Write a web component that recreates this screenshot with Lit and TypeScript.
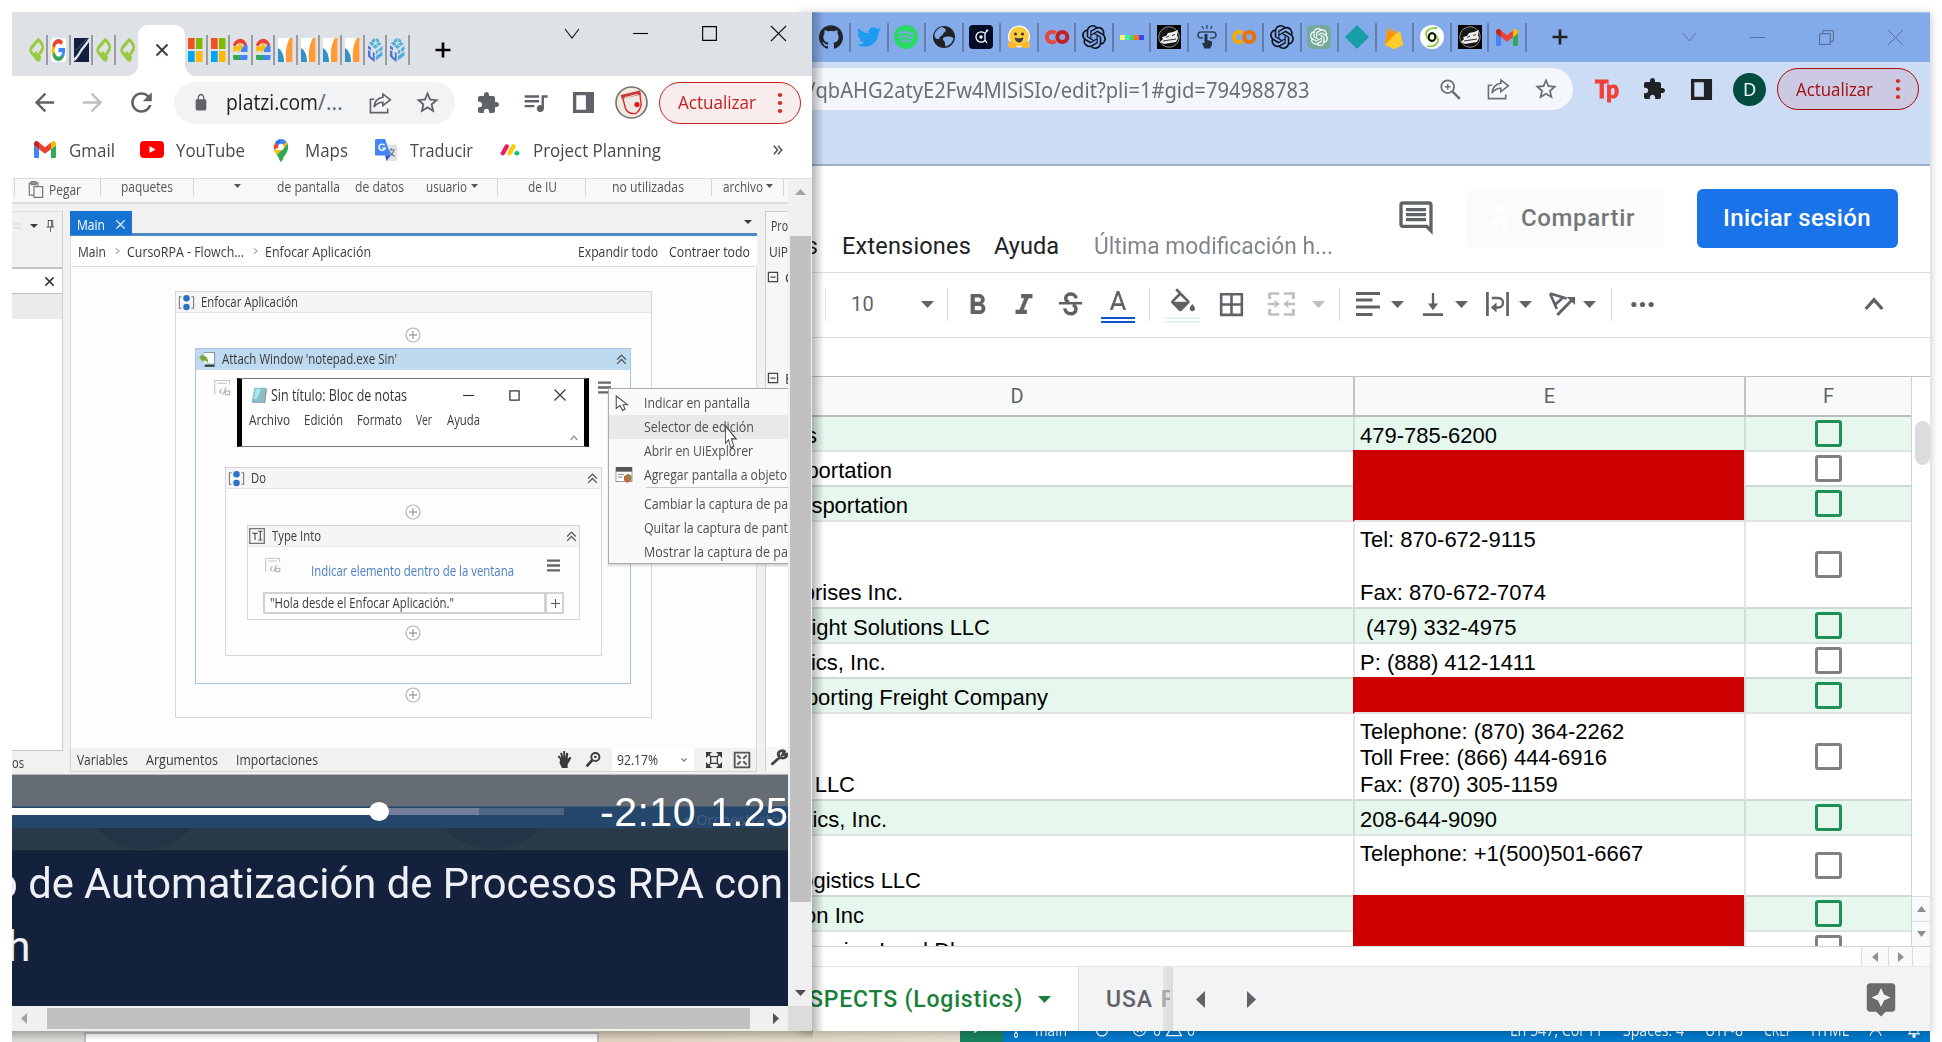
import { LitElement, html, svg, css } from "lit";
import { customElement } from "lit/decorators.js";

type Item = [number, number, unknown, string?];

/** Lays items out left to right: [start x, width, content, class]. */
const row = (origin: number, items: Item[]) => {
  let cur = origin;
  return items.map(([x, w, c, cls]) => {
    const m = x - cur;
    cur = x + w;
    return html`<div class="cell ${cls ?? ""}" style="margin-left:${m}px;width:${w}px">${c}</div>`;
  });
};
const txt = (x1: number, x2: number, s: string, cls = ""): Item => [x1, x2 - x1, html`<span class="fit">${s}</span>`, cls];
const gfx = (w: number, h: number, body: unknown, vb = "0 0 24 24") =>
  html`<svg width=${w} height=${h} viewBox=${vb} preserveAspectRatio="none">${body}</svg>`;
const ic = (cx: number, w: number, body: unknown, h = w, vb = "0 0 24 24", cls = ""): Item => [cx - w / 2, w, gfx(w, h, body, vb), cls];
const p = (d: string, fill = "currentColor") => svg`<path d=${d} fill=${fill}></path>`;
const s = (d: string, c = "currentColor", w = 2) => svg`<path d=${d} fill="none" stroke=${c} stroke-width=${w}></path>`;

const BACK = p("M20 11H7.83l5.59-5.59L12 4l-8 8 8 8 1.41-1.41L7.83 13H20v-2z");
const FWD = p("M12 4l-1.41 1.41L16.17 11H4v2h12.17l-5.58 5.59L12 20l8-8z");
const RELOAD = p("M17.65 6.35C16.2 4.9 14.21 4 12 4c-4.42 0-7.99 3.58-7.99 8s3.57 8 7.99 8c3.73 0 6.84-2.55 7.73-6h-2.08c-.82 2.33-3.04 4-5.65 4-3.31 0-6-2.69-6-6s2.69-6 6-6c1.66 0 3.14.69 4.22 1.78L13 11h7V4l-2.35 2.35z");
const STAR = p("M22 9.24l-7.19-.62L12 2 9.19 8.63 2 9.24l5.46 4.73L5.82 21 12 17.27 18.18 21l-1.63-7.03L22 9.24zM12 15.4l-3.76 2.27 1-4.28-3.32-2.88 4.38-.38L12 6.1l1.71 4.04 4.38.38-3.32 2.88 1 4.28L12 15.4z");
const LOCK = p("M18 8h-1V6c0-2.76-2.24-5-5-5S7 3.24 7 6v2H6c-1.1 0-2 .9-2 2v10c0 1.1.9 2 2 2h12c1.1 0 2-.9 2-2V10c0-1.1-.9-2-2-2zM8.9 6c0-1.71 1.39-3.1 3.1-3.1s3.1 1.39 3.1 3.1v2H8.9V6z");
const PUZZLE = p("M20.5 11H19V7c0-1.1-.9-2-2-2h-4V3.5C13 2.12 11.88 1 10.5 1S8 2.12 8 3.5V5H4c-1.1 0-1.99.9-1.99 2v3.8H3.5c1.49 0 2.7 1.21 2.7 2.7s-1.21 2.7-2.7 2.7H2V20c0 1.1.9 2 2 2h3.8v-1.5c0-1.49 1.21-2.7 2.7-2.7 1.49 0 2.7 1.21 2.7 2.7V22H17c1.1 0 2-.9 2-2v-4h1.5c1.38 0 2.5-1.12 2.5-2.5S21.88 11 20.5 11z");
const QUEUE = p("M15 6H3v2h12V6zm0 4H3v2h12v-2zM3 16h8v-2H3v2zM17 6v8.18c-.31-.11-.65-.18-1-.18-1.66 0-3 1.34-3 3s1.34 3 3 3 3-1.34 3-3V8h3V6h-5z");
const PANEL = p("M1 1H23V23H1ZM4.5 4.5V19.5H14.5V4.5Z");
const SHARE = svg`${s("M5.5 8H1.5V22.5H19.5V18", "currentColor", 1.7)}${s("M14.5 2.2L22.3 8.5L14.5 14.8V11.2C10 11.2 7.5 13 5.2 16.5C5.8 11 8.5 6.6 14.5 5.8Z", "currentColor", 1.7)}`;
const ZOOM = svg`<circle cx="9.5" cy="9.5" r="5.7" fill="none" stroke="currentColor" stroke-width="1.600"></circle>${s("M13.800 13.800L20.300 20.300", "currentColor", 2.200)}${s("M9.500 7V12M7 9.500H12", "currentColor", 1.300)}`;
const PLUS = s("M12 2V22M2 12H22", "currentColor", 3.6);
const DOTS3 = svg`<circle cx="12" cy="4" r="2.1" fill="currentColor"></circle><circle cx="12" cy="12" r="2.1" fill="currentColor"></circle><circle cx="12" cy="20" r="2.1" fill="currentColor"></circle>`;
const CHEV = s("M1 1L8 10L15 1", "currentColor", 1.1);
const GITHUB = p("M12 .297c-6.63 0-12 5.373-12 12 0 5.303 3.438 9.8 8.205 11.385.6.113.82-.258.82-.577 0-.285-.01-1.04-.015-2.04-3.338.724-4.042-1.61-4.042-1.61C4.422 18.07 3.633 17.7 3.633 17.7c-1.087-.744.084-.729.084-.729 1.205.084 1.838 1.236 1.838 1.236 1.07 1.835 2.809 1.305 3.495.998.108-.776.417-1.305.76-1.605-2.665-.3-5.466-1.332-5.466-5.93 0-1.31.465-2.38 1.235-3.22-.135-.303-.54-1.523.105-3.176 0 0 1.005-.322 3.3 1.23.96-.267 1.98-.399 3-.405 1.02.006 2.04.138 3 .405 2.28-1.552 3.285-1.23 3.285-1.23.645 1.653.24 2.873.12 3.176.765.84 1.23 1.91 1.23 3.22 0 4.61-2.805 5.625-5.475 5.92.42.36.81 1.096.81 2.22 0 1.606-.015 2.896-.015 3.286 0 .315.21.69.825.57C20.565 22.092 24 17.592 24 12.297c0-6.627-5.373-12-12-12", "#20252c");
const TWITTER = p("M23.953 4.57a10 10 0 01-2.825.775 4.958 4.958 0 002.163-2.723c-.951.555-2.005.959-3.127 1.184a4.92 4.92 0 00-8.384 4.482C7.69 8.095 4.067 6.13 1.64 3.162a4.822 4.822 0 00-.666 2.475c0 1.71.87 3.213 2.188 4.096a4.904 4.904 0 01-2.228-.616v.06a4.923 4.923 0 003.946 4.827 4.996 4.996 0 01-2.212.085 4.936 4.936 0 004.604 3.417 9.867 9.867 0 01-6.102 2.105c-.39 0-.779-.023-1.17-.067a13.995 13.995 0 007.557 2.209c9.053 0 13.998-7.496 13.998-13.985 0-.21 0-.42-.015-.63A9.935 9.935 0 0024 4.59z", "#1d9bf0");
const OPENAI_D = "M22.2819 9.8211a5.9847 5.9847 0 0 0-.5157-4.9108 6.0462 6.0462 0 0 0-6.5098-2.9A6.0651 6.0651 0 0 0 4.9807 4.1818a5.9847 5.9847 0 0 0-3.9977 2.9 6.0462 6.0462 0 0 0 .7427 7.0966 5.98 5.98 0 0 0 .511 4.9107 6.051 6.051 0 0 0 6.5146 2.9001A5.9847 5.9847 0 0 0 13.2599 24a6.0557 6.0557 0 0 0 5.7718-4.2058 5.9894 5.9894 0 0 0 3.9977-2.9001 6.0557 6.0557 0 0 0-.7475-7.0729zm-9.022 12.6081a4.4755 4.4755 0 0 1-2.8764-1.0408l.1419-.0804 4.7783-2.7582a.7948.7948 0 0 0 .3927-.6813v-6.7369l2.02 1.1686a.071.071 0 0 1 .038.052v5.5826a4.504 4.504 0 0 1-4.4945 4.4944zm-9.6607-4.1254a4.4708 4.4708 0 0 1-.5346-3.0137l.142.0852 4.783 2.7582a.7712.7712 0 0 0 .7806 0l5.8428-3.3685v2.3324a.0804.0804 0 0 1-.0332.0615L9.74 19.9502a4.4992 4.4992 0 0 1-6.1408-1.6464zM2.3408 7.8956a4.485 4.485 0 0 1 2.3655-1.9728V11.6a.7664.7664 0 0 0 .3879.6765l5.8144 3.3543-2.0201 1.1685a.0757.0757 0 0 1-.071 0l-4.8303-2.7865A4.504 4.504 0 0 1 2.3408 7.872zm16.5963 3.8558L13.1038 8.364 15.1192 7.2a.0757.0757 0 0 1 .071 0l4.8303 2.7913a4.4944 4.4944 0 0 1-.6765 8.1042v-5.6772a.79.79 0 0 0-.407-.667zm2.0107-3.0231l-.142-.0852-4.7735-2.7818a.7759.7759 0 0 0-.7854 0L9.409 9.2297V6.8974a.0662.0662 0 0 1 .0284-.0615l4.8303-2.7866a4.4992 4.4992 0 0 1 6.6802 4.66zM8.3065 12.863l-2.02-1.1638a.0804.0804 0 0 1-.038-.0567V6.0742a4.4992 4.4992 0 0 1 7.3757-3.4537l-.142.0805L8.704 5.459a.7948.7948 0 0 0-.3927.6813zm1.0976-2.3654l2.602-1.4998 2.6069 1.4998v2.9994l-2.5974 1.4997-2.6067-1.4997Z";
const OPENAI = p(OPENAI_D, "#0c1018");
const OPENAI_GREEN = svg`<rect width="24" height="24" rx="5" fill="#74aa9c"></rect><g transform="translate(3 3) scale(.75)">${p(OPENAI_D, "#fff")}</g>`;
const GOOGLE = svg`<rect width="24" height="24" rx="4" fill="#fff"></rect>
  ${p("M22.56 12.25c0-.78-.07-1.53-.2-2.25H12v4.26h5.92c-.26 1.37-1.04 2.53-2.21 3.31v2.77h3.57c2.08-1.92 3.28-4.74 3.28-8.09z", "#4285f4")}
  ${p("M12 23c2.97 0 5.46-.98 7.28-2.66l-3.57-2.77c-.98.66-2.23 1.06-3.71 1.06-2.86 0-5.29-1.93-6.16-4.53H2.18v2.84C3.99 20.53 7.7 23 12 23z", "#34a853")}
  ${p("M5.84 14.09c-.22-.66-.35-1.36-.35-2.09s.13-1.43.35-2.09V7.07H2.18C1.43 8.55 1 10.22 1 12s.43 3.45 1.18 4.93l2.85-2.22.81-.62z", "#fbbc05")}
  ${p("M12 5.38c1.62 0 3.06.56 4.21 1.64l3.15-3.15C17.45 2.09 14.97 1 12 1 7.7 1 3.99 3.47 2.18 7.07l3.66 2.84c.87-2.6 3.3-4.53 6.16-4.53z", "#ea4335")}`;
const GMAIL = svg`${p("M1.6 18H5.5V8.7L0 4.6V16.4A1.6 1.6 0 0 0 1.6 18Z", "#4285f4")}${p("M18.5 18h3.9A1.6 1.6 0 0 0 24 16.4V4.6L18.5 8.7Z", "#34a853")}${p("M18.5 1.6V8.7L24 4.6V2.5C24 .5 21.6-.7 20 .5Z", "#fbbc04")}${p("M5.5 8.7V1.6L12 6.5 18.5 1.6V8.7L12 13.6Z", "#ea4335")}${p("M0 2.5V4.6L5.5 8.7V1.6L4 .5C2.4-.7 0 .5 0 2.5Z", "#c5221f")}`;
const PLATZI = s("M14 22L3.500 14Q1.500 12 3.500 10L13 3Q15 1 17 3L21.500 7Q23 9 21.500 11.500L14 18.500L10 14M14 22Q17 22.500 17.500 18", "#98ca3f", 3.8);
const SLASH = svg`<rect width="24" height="24" fill="#121f3d"></rect>${s("M-1 22C6 20 9 14 13 11S20 6 25 1", "#dfe3ea", 3)}${s("M2 12C8 11 9 7 21 1", "#8090ac", .8)}`;
const MS = svg`${p("M0 0H11V11H0Z", "#f25022")}${p("M13 0H24V11H13Z", "#7fba00")}${p("M0 13H11V24H0Z", "#00a4ef")}${p("M13 13H24V24H13Z", "#ffb900")}`;
const GCLOUD = svg`${s("M2 8C4 2 20 0 22 10", "#ea4335", 4.4)}${p("M0 9L9 8V4L17 9L8 15V12L1 14Z", "#fbbc04")}${p("M13 12L20 6L24 9V14H13Z", "#4285f4")}${p("M0 17H13V22H2Q0 22 0 20Z", "#34a853")}${p("M12 17H24V20Q24 22 22 22H12Z", "#4285f4")}`;
const WAVE = svg`<rect width="24" height="24" fill="#fff"></rect>${p("M24 0H20C14 5 12 14 13 24H24Z", "#ff9a36")}${p("M0 10C6 12 10 17 10 24H0Z", "#2f93c8")}`;
const CUBES = svg`${p("M6 2L11.500 0L12 3.500L7 5ZM13 0L19 2L17.500 4.500L12.800 3.500ZM1 5L6 3.500L11 6L6 8ZM13 6L18 4L23 5.500L18 8ZM7 8.500L12 6.500L17 8.500L12 11Z", "#55b4d8")}${p("M0 7.500L5 9.500V12.500L0 10.500ZM0 12L4 13.500V18L8 20V14L11 15V24L6 22L0 18.500Z", "#4f74d8")}${p("M13 13L17 11V14.500L13 16.500ZM18.500 10.500L24 8V12L18.500 14ZM13 18L24 13.500V17.500L13 22.500Z", "#4aaede")}`;
const SPOTIFY = svg`<circle cx="12" cy="12" r="12" fill="#2bd967"></circle>${s("M4.500 8.200C9 6.600 15.500 7.200 19.600 9.400", "#7fa8d8", 2.3)}${s("M5.300 12.300C9.500 11 14.500 11.600 18.400 13.700", "#7fa8d8", 2)}${s("M6 16C9.500 15 13.800 15.500 17 17.300", "#7fa8d8", 1.7)}`;
const GLOBE = svg`<circle cx="12" cy="12" r="11" fill="#202124"></circle>${p("M10 2C13 3 15 5 13 7C10 8 12 10 9 11C6 12 9 14 6 14C4 14 2 12 2.500 9C4 5 7 2.500 10 2Z", "#84abe9")}${p("M13 12C17 11 20 12 21.500 13C21 17 18 20 14 21.500C12 20 14 18 12 16C10 14 11 12.500 13 12Z", "#84abe9")}`;
const GRAPH = svg`<rect width="24" height="24" rx="4" fill="#050b26"></rect>${s("M16 8.500A5.200 5.200 0 1 0 16 15.500M16 8.500L18 5.500M16 8V15L18 18", "#fff", 1.3)}<circle cx="12" cy="12" r="1.700" fill="#fff"></circle><circle cx="18.200" cy="5.500" r="1.100" fill="#fff"></circle>`;
const HUG = svg`<circle cx="12" cy="11.500" r="11" fill="#fff"></circle><circle cx="12" cy="11.500" r="9.800" fill="#ffc93c"></circle><circle cx="8.500" cy="9" r="1.500" fill="#333"></circle><circle cx="15.500" cy="9" r="1.500" fill="#333"></circle>${p("M7.500 12.500Q12 14 16.500 12.500Q15.500 17.500 12 17.500T7.500 12.500Z", "#3a3b45")}${p("M1 20C2 15 5 15 7 18C10 18 10 23 8 23H4C2 23 1 22 1 20ZM23 20C22 15 19 15 17 18C14 18 14 23 16 23H20C22 23 23 22 23 20Z", "#ffb52e")}`;
const co = (a: string, b: string) => svg`${s("M10.500 8A5.200 5.200 0 1 0 10.500 16", a, 4)}<circle cx="17.300" cy="12" r="5" fill="none" stroke=${b} stroke-width="4"></circle>`;
const PIX = svg`${p("M0 10H5V15H0Z", "#f8f36a")}${p("M5 10H10V15H5Z", "#49e6c4")}${p("M10 10H14V15H10Z", "#46d84a")}${p("M14 10H19V15H14Z", "#ff6a2b")}${p("M19 10H24V15H19Z", "#3949f0")}`;
const SHIP = svg`<rect width="24" height="24" fill="#000"></rect><circle cx="12" cy="12" r="10.300" fill="#141414" stroke="#aaa" stroke-width=".8"></circle>${p("M3 17L6 14L5 12L9 11L11 8L16 7L21 5L20 10L21 13L19 17L13 18L7 19Z", "#eee")}${s("M6 16L19 14M9 12.500L12 11M15 10.500L18 9.500M6 5L11 4", "#333", 1)}`;
const TOUCH = svg`${s("M12 0V4M7 1L8.500 4M17 1L15.500 4", "#33465e", 1.3)}${s("M8 13H6A3 3 0 0 1 6 7H18A3 3 0 0 1 18 13H15", "#33465e", 1.600)}${p("M9.500 9.500Q11 8 12.500 9.500V15L17 16.500V20L15 23.500H9.500L7 18L9.500 18Z", "#24323f")}`;
const DIAMOND = p("M12 0L24 12L12 24L0 12Z", "#189ea9");
const FIRE = svg`${p("M3 20L6 2L10 8L12 4L15 9L18 6L21 20L12 24Z", "#ffca28")}${p("M3 20L6 2L10 8L12 4L14 8Z", "#ff9100")}${p("M3 20L18 6L21 20L12 24Z", "#ffcb2d")}`;
const SPIRAL = svg`<circle cx="12" cy="12" r="12" fill="#fff"></circle>${s("M17 3C9 2 4 7 7 12C8 16 14 17 16 13M7 21C15 23 20 17 17 12C15 8 10 8 9 11", "#8bc83e", 1.800)}<ellipse cx="12" cy="12" rx="3.200" ry="4" fill="none" stroke="#111" stroke-width="2"></ellipse>`;
const MAPS = svg`${p("M12 1A9 9 0 0 0 5 4.500L10 9Z", "#1a73e8")}${p("M5 4.500A9.500 9.500 0 0 0 3.500 12L10 9Z", "#ea4335")}${p("M12 1A9 9 0 0 1 20 6L12 12L9 8Z", "#4285f4")}${p("M3.500 12Q5 15 7 17L20 6A10 10 0 0 0 18 4L9 12Z", "#fbbc04")}${p("M7 17C10 20 10.500 24 12 24S14 20 17 17C20.500 13 21.500 9 20 6Z", "#34a853")}<circle cx="12" cy="9" r="3.300" fill="#fff"></circle>`;
const YT = svg`<rect width="24" height="17" rx="4" fill="#f00"></rect>${p("M9.500 5V12L15.500 8.500Z", "#fff")}`;
const TRANSL = svg`${p("M9 6H22.500Q24 6 24 7.500V22.500Q24 24 22.500 24H13Z", "#dfe1e5")}${s("M14 12H22M18 10V12M20.500 12C20 15 17 18 15 19M15.500 13.500C17 16 19 18 21.500 19", "#6b7c93", 1.300)}${p("M1.500 0H11L17 18H1.500Q0 18 0 16.500V1.500Q0 0 1.500 0Z", "#4285f4")}${p("M11 18H17L12.500 24Z", "#3a53c5")}${s("M10.500 7A3.400 3.400 0 1 0 11 10H8", "#fff", 1.600)}`;
const bar = (d: string, c: string) => svg`<path d=${d} fill="none" stroke=${c} stroke-width="5.500" stroke-linecap="round"></path>`;
const MONDAY = svg`${bar("M3.500 17.500L8.500 7.500", "#f6195c")}${bar("M12 17.500L17 7.500", "#ffcb00")}<circle cx="21.300" cy="17.300" r="3.100" fill="#00ca72"></circle>`;
const CREST = svg`<circle cx="12" cy="12" r="11.300" fill="#efe9e2" stroke="#77736d" stroke-width="1.200"></circle>${s("M5.500 8L18 5L19 13Q18.500 18 15 20Q9 20.500 7.500 16Z", "#d8262c", 1)}${s("M4.500 8L18.500 4.700", "#c9393b", 3)}${s("M7 8.500L16.500 6", "#f0dcd8", .8)}<circle cx="16" cy="13.500" r="1.900" fill="#e01818"></circle>`;
const CARET = p("M0 0H10L5 5.500Z");
const TREE = svg`${s("M5 4H2V20H5M19 4H22V20H19", "#777", 1.500)}<circle cx="12" cy="6" r="4.600" fill="#2a72c8"></circle><circle cx="12" cy="18.500" r="4.600" fill="#2a72c8"></circle>`;
const ADD = svg`<circle cx="12" cy="12" r="10.500" fill="#fff" stroke="#b4b4b4" stroke-width="1.800"></circle>${s("M12 6V18M6 12H18", "#a8a8a8", 2.200)}`;
const UP2 = s("M4 12L12 4L20 12M4 20L12 12L20 20", "#555", 2.300);
const BURGER = s("M0 3H24M0 12H24M0 21H24", "#666", 4.500);
const SNIP = svg`${s("M1 22V2H22V8M5 6H18", "#c4c4c4", 1.500)}${s("M11 14L8 18L11 21M17 12L13 22M16 22V17H22V22H16", "#b8b8b8", 1.800)}`;

const LEFT_TABS = [PLATZI, GOOGLE, SLASH, PLATZI, PLATZI];
const LEFT_TABS_2 = [MS, MS, GCLOUD, GCLOUD, WAVE, WAVE, WAVE, WAVE, CUBES, CUBES];
const RIGHT_TABS = [GITHUB, TWITTER, SPOTIFY, GLOBE, GRAPH, HUG, co("#e8453c", "#c5221f"), OPENAI, PIX, SHIP, TOUCH, co("#f9ab00", "#e8710a"), OPENAI, OPENAI_GREEN, DIAMOND, FIRE, SPIRAL, SHIP];

interface RowData { h: number; d: string; end: number; e: string; red?: boolean; green?: boolean; }
const ROWS: RowData[] = [
  { h: 35, d: "s", end: 817, e: "479-785-6200", green: true },
  { h: 35, d: "portation", end: 892, e: "", red: true },
  { h: 35, d: "nsportation", end: 908, e: "", red: true, green: true },
  { h: 87, d: "prises Inc.", end: 903, e: "Tel: 870-672-9115\n\nFax: 870-672-7074" },
  { h: 35, d: "eight Solutions LLC", end: 990, e: " (479) 332-4975", green: true },
  { h: 35, d: "tics, Inc.", end: 885.5, e: "P: (888) 412-1411" },
  { h: 35, d: "porting Freight Company", end: 1048, e: "", red: true, green: true },
  { h: 87, d: "LLC", end: 855, e: "Telephone: (870) 364-2262\nToll Free: (866) 444-6916\nFax: (870) 305-1159" },
  { h: 35, d: "tics, Inc.", end: 887, e: "208-644-9090", green: true },
  { h: 61, d: "ogistics LLC", end: 921, e: "Telephone: +1(500)501-6667\n " },
  { h: 35, d: "on Inc", end: 864, e: "", red: true, green: true },
  { h: 35, d: "ning Land Dl", end: 955, e: "", red: true },
];

@customElement("app-root")
export class AppRoot extends LitElement {
  static styles = css`
    :host { display: block; width: 1942px; height: 1042px; position: relative; overflow: hidden; background: #fff; font-family: "Open Sans", "Noto Sans", sans-serif; }
    * { box-sizing: border-box; }
    svg { display: block; flex: none; overflow: visible; }
    .cell { flex: none; display: flex; align-items: center; white-space: nowrap; height: 100%; }
    .fit { display: inline-block; white-space: pre; transform-origin: 0 50%; }
    .row { display: flex; align-items: center; }
    .win { position: absolute; display: flex; flex-direction: column; overflow: hidden; }

    .desk { position: absolute; left: 12px; top: 1016px; width: 1918px; height: 26px; display: flex; background: #e4ddd0; }
    .desk-a { width: 72px; background: #d6d8d3; }
    .desk-b { width: 515px; margin-top: 16px; background: #fff; border: 2px solid #b9b9b9; border-bottom: 0; }
    .desk-c { width: 361px; background: linear-gradient(90deg, #ddd0bd, #e8dfcf); }
    .remote { width: 43px; background: #16825d; color: #fff; padding-left: 13px; }
    .status { flex: 1; background: #007acc; color: #fff; font-size: 17px; height: 26px; }

    .right { left: 800px; top: 12px; width: 1130px; height: 1019px; background: #fff; box-shadow: 0 2px 9px rgba(0,0,0,.25); }
    .r-tabs { height: 50px; flex: none; background: #84abe9; border-top: 1px solid #a9c5f2; padding-bottom: 1px; }
    .r-tab { flex: none; width: 37.56px; height: 29px; display: flex; align-items: center; justify-content: center; border-right: 2px solid #637fa9; }
    .r-tabs .first { margin-left: 13.5px; }
    .r-tool { height: 104px; flex: none; background: #ccdcf5; border-bottom: 2px solid #9fb0ca; }
    .r-tool .row { height: 54px; color: #5f6368; }
    .r-tool .r-url { width: 773px; height: 42px; background: #f4f7fc; border-radius: 0 21px 21px 0; font-family: "Noto Sans", sans-serif; font-size: 22px; color: #6c7075; }
    .dark { color: #202124; }
    .tp { font: 900 25px "Lato", sans-serif; color: #f23f3a; margin-top: -2px; -webkit-text-stroke: 1px #f23f3a; }
    .avatar { width: 33px; height: 33px; border-radius: 50%; background: #004d40; color: #fff; font-size: 18px; display: flex; align-items: center; justify-content: center; }
    .upd { height: 42px; border-radius: 21px; border: 1.5px solid #c5221f; background: #f9ecec; color: #c5221f; width: 142px; font-size: 19px; }
    .upd .fit { margin-top: -1px; }
    .r-tool .upd { height: 42px; border-color: #a50e0e; background: #ccc9e2; color: #a50e0e; }
    .red { color: #d93025; }

    .s-head { height: 107px; flex: none; border-bottom: 1px solid #dadce0; padding-bottom: 2px; font-family: Roboto, sans-serif; font-size: 23.500px; color: #202124; }
    .s-head .low { padding-top: 56px; }
    .grey { color: #80868b; }
    .btn { width: 198px; height: 59px; border-radius: 6px; background: #fbfbfb; color: #747679; font-weight: 500; font-size: 24px; }
    .btn.blue { width: 201px; background: #1a73e8; color: #fff; }
    .s-bar { height: 65px; flex: none; border-bottom: 1px solid #dadce0; padding-bottom: 2px; color: #5f6368; font: 20px Roboto, sans-serif; }
    .vr { width: 1px; height: 33px; background: #dadce0; }
    .tint { display: flex; flex-direction: column; align-items: center; padding-top: 2px; }
    .tint i { display: block; width: 34px; height: 6px; margin-top: 3px; border-top: 2px solid #1155cc; border-bottom: 2px solid #1155cc; }
    .tint.pale i { border-color: #e3f5ea; width: 35px; }
    .light { color: #bdbfc1; }
    .s-formula { height: 38px; flex: none; }
    .s-grid { height: 571px; flex: none; display: flex; border-top: 1px solid #c0c0c0; border-bottom: 1px solid #d5d5d5; }
    .s-table { width: 1112px; border-right: 1px solid #d0d2d4; overflow: hidden; }
    .g-row { display: grid; grid-template-columns: 553px 391px 167px; }
    .g-head { height: 40px; background: #f8f9fb; border-bottom: 2px solid #bdbdbd; font: 20px Roboto, sans-serif; color: #5f6368; }
    .g-head div { display: flex; align-items: center; justify-content: center; border-left: 2px solid #c4c4c4; }
    .g-head div:first-child { padding-right: 119px; border: 0; }
    .g-data { font: 22px/26.5px "Liberation Sans", Arial, sans-serif; color: #000; background: #fff; }
    .g-data > div { border-left: 2px solid #e2e3e3; border-bottom: 2px solid #cddbd2; display: flex; align-items: flex-end; white-space: pre; }
    .g-data.green { background: #e6f7ed; }
    .g-data.green > div { border-bottom-color: #e0e3e1; border-left-color: #d0ddd5; }
    .g-data > .d { border-left: 0; }
    .d span { display: flex; justify-content: flex-end; padding-bottom: 1px; flex: none; }
    .g-data .e { padding: 0 0 1px 5px; }
    .g-data .e.redc { background: #cc0000; border-left-color: #cc0000; margin-top: -2px; }
    .g-data.next .e.redc { border-bottom-color: #bc0000; }
    .g-data .f { align-items: center; justify-content: center; }
    .box { width: 27px; height: 27px; border: 3px solid #808080; border-radius: 3px; }
    .green .box { border-color: #1f8f55; }
    .s-vs { width: 18px; display: flex; flex-direction: column; color: #8b8f94; }
    .s-thumb { width: 15px; height: 44px; margin: 44px 0 0 3px; background: #dadce0; border-radius: 8px; }
    .s-vsb { height: 25px; border-top: 1px solid #dadce0; background: #f8f9fa; display: flex; align-items: center; justify-content: center; }
    .s-vs .first { margin-top: auto; }
    .s-hs { height: 20px; flex: none; border-bottom: 1px solid #e4e5ee; color: #8b8f94; }
    .hb { background: #f8f9fa; border-left: 1px solid #dadce0; justify-content: center; }
    .s-tabs { flex: 1; background: #f1f3f4; font: 500 23px Roboto, sans-serif; color: #5f6368; }
    .s-tabs > .cell { padding-bottom: 2px; }
    .act { background: #fff; color: #188038; height: 100%; width: 279px; border-right: 1px solid #dcdcdc; padding-bottom: 2px; }
    .fade { width: 10px; height: 64px; background: linear-gradient(90deg, #d9dbdc, #c8cacb); opacity: .6; flex: none; }
    .edge { position: absolute; left: 12px; top: 0; width: 12px; height: 100%; background: linear-gradient(90deg, rgba(0,0,0,.28), transparent); }

    .left { left: 12px; top: 12px; width: 800px; height: 1018.500px; background: #fff; }
    .left-shadow { position: absolute; left: 12px; top: 1030px; width: 801px; height: 10px; background: linear-gradient(rgba(0,0,0,.25), transparent); }
    .l-tabs { height: 64px; flex: none; background: #dee1e6; display: flex; }
    .l-group { display: flex; align-items: center; padding-top: 12px; }
    .l-tab { width: 22.46px; height: 30px; display: flex; align-items: center; justify-content: center; border-right: 2px solid #999ca1; }
    .l-tab.none { border: 0; }
    .cur { width: 47px; height: 51px; margin-top: 13px; background: #fff; border-radius: 10px 10px 0 0; display: flex; align-items: center; justify-content: center; position: relative; color: #3c4043; padding-bottom: 2px; }
    .cur::before, .cur::after { content: ""; position: absolute; bottom: 0; width: 12px; height: 12px; }
    .cur::before { left: -12px; background: radial-gradient(circle at 0 0, transparent 12px, #fff 12.500px); }
    .cur::after { right: -12px; background: radial-gradient(circle at 100% 0, transparent 12px, #fff 12.500px); }
    .l-ctl { height: 43px; color: #111; margin-left: -1px; }
    .l-tool { height: 53px; flex: none; color: #5f6368; }
    .l-url { width: 281px; height: 42px; border-radius: 21px; background: #f1f3f4; font-size: 21px; }
    .l-url .fit { margin-top: -1px; }
    .l-marks { height: 50px; flex: none; border-bottom: 1px solid #dadce0; padding-bottom: 8px; font-size: 18.500px; color: #46494d; }
    .l-marks .fit { margin-top: -1px; }
    .l-body { height: 827px; flex: none; display: flex; }
    .video { width: 776px; overflow: hidden; display: flex; flex-direction: column; }
    .l-vs { width: 24px; background: #f0f0f0; display: flex; flex-direction: column; align-items: center; color: #a3a3a3; }
    .l-vs .th { width: 21px; height: 666px; margin-top: 41px; background: #c1c1c1; }
    .l-hs { flex: 1; background: #f0f0f0; color: #505050; }
    .l-hs .th { width: 703px; height: 21px; background: #c1c1c1; }
    .corner { background: #dcdcdc; }

    .ui { height: 595px; flex: none; background: #f1f1f1; font-size: 14px; color: #3a3a3a; filter: blur(.4px); }
    .ribbon { height: 25px; background: #f8f8f8; border-bottom: 2px solid #dcdcdc; }
    .ribbon .cell { padding-bottom: 9px; color: #555; }
    .ribbon .sep { width: 1px; background: #d4d4d4; height: 17px; padding: 0; align-self: flex-start; }
    .ribbon .peg { padding: 0 0 3px; }
    .body { display: flex; height: 563px; margin-top: 7px; }
    .pa { width: 51px; border-right: 1px solid #cfcfcf; display: flex; flex-direction: column; border-top: 1px solid #ddd; height: 540px; }
    .pa1 { height: 57px; border-bottom: 2px solid #c4c4c4; padding-bottom: 28px; }
    .pa2 { height: 25px; background: #fff; border-bottom: 1px solid #bcbcbc; }
    .pa3 { height: 25px; background: #ebebeb; }
    .pa4 { flex: 1; background: #fff; border-bottom: 1px solid #c4c4c4; }
    .pwrap { width: 58px; }
    .main { width: 687px; }
    .mtab { height: 25px; border-bottom: 3px solid #4c88c6; }
    .mtab .on { background: #1673d1; color: #fff; width: 62px; height: 24px; align-self: flex-start; padding-top: 2px; }
    .crumbs { height: 31px; background: #fff; border-bottom: 1px solid #e0e0e0; border-left: 1px solid #ddd; }
    .canvas { height: 481px; background: #fdfdfd; position: relative; border-left: 1px solid #ddd; border-right: 1px solid #ddd; z-index: 2; }
    .canvas .fit { margin-top: -2px; }
    .mfoot { height: 24px; border: 1px solid #d4d4d4; border-top: 0; }
    .pc { margin-left: 8px; width: 23px; border-left: 1px solid #cfcfcf; border-top: 1px solid #ccc; background: #f6f6f6; height: 560px; }
    .pc div.row { height: 26px; }
    .pcw { background: #fff; flex: 1; }
    .node { position: absolute; background: #fdfdfd; border: 1px solid #d6d6d6; }
    .node.sel { border-color: #a9c4e6; }
    .hd { height: 21px; background: #f5f5f8; border-bottom: 1px solid #e6e6e8; }
    .sel .hd { background: #bddaf1; border-color: #bddaf1; }
    .pin { position: absolute; }
    .note { position: absolute; background: #fff; border: 1px solid #777; border-left: 5px solid #000; border-right: 5px solid #000; }
    .big { font-size: 16.500px; color: #333; }
    .link { color: #4c7fc4; }
    .field { position: absolute; background: #fff; border: 2px solid #d2d2d2; }
    .menu { position: absolute; background: #f9f9f9; border: 1px solid #aaa; border-right: 0; box-shadow: 0 2px 2px rgba(0,0,0,.15); color: #505050; padding-top: 2px; }
    .mi { height: 24px; }
    .mi.on { background: #e9e9e9; }
    .hr { height: 1px; background: #c8c8c8; margin: 0 0 4px 37px; }
    .zoom { background: #fff; }

    .player { height: 77px; flex: none; display: flex; flex-direction: column; position: relative; }
    .pl1 { height: 32px; background: #656c73; border-top: 1px solid #b5b8bb; }
    .pl2 { height: 22px; background: #25476c; border-top: 1px solid #3d556f; }
    .pl3 { height: 23px; background: #2a3a49; border-bottom: 1px solid #1c2530; display: flex; padding-left: 76px; overflow: hidden; }
    .pl3 i { width: 112px; height: 92px; flex: none; margin-top: -71px; border-radius: 50%; background: #223445; }
    .pl3 i + i { margin-left: 236px; }
    .over { position: absolute; left: 0; top: 0; width: 776px; height: 77px; color: #fff; font: 41px "Liberation Sans", Arial, sans-serif; }
    .seek { display: flex; height: 7px; width: 552px; position: relative; margin-top: -2px; }
    .seek i { height: 7px; width: 367px; background: #fff; }
    .seek b { height: 7px; width: 100px; background: #747e9a; }
    .seek u { height: 7px; flex: 1; background: #4d6685; }
    .knob { position: absolute; left: 357px; top: -6px; width: 20px; height: 19px; border-radius: 50%; background: #fff; }
    .ghost { position: absolute; left: 671px; top: 35px; font-size: 15px; color: #fff; opacity: .13; white-space: nowrap; }
    .title { flex: 1; background: #14213d; color: #eff0f5; font: 42.500px/63.500px Roboto, sans-serif; }
    .title .row { height: 63.500px; padding-top: 1px; }
  `;

  protected firstUpdated() {
    // Wide labels are narrowed to their cell; short ones get even letter spacing.
    this.renderRoot.querySelectorAll<HTMLElement>(".fit").forEach((el) => {
      const target = parseFloat(el.parentElement!.style.width);
      const n = (el.textContent ?? "").length;
      const w = el.getBoundingClientRect().width;
      if (!target || !n) return;
      if (w > target) el.style.transform = `scaleX(${target / w})`;
      else el.style.letterSpacing = `${(target - w) / n}px`;
    });
  }

  private node(x: number, y: number, x2: number, y2: number, cls: string, head: Item[]) {
    return html`<div class="node ${cls}" style="left:${x - 71}px;top:${y - 267}px;width:${x2 - x}px;height:${y2 - y}px">
      <div class="hd row">${row(x + 1, head)}</div></div>`;
  }
  private pin(cx: number, cy: number, w: number, body: unknown, h = w) {
    return html`<div class="pin" style="left:${cx - 71 - w / 2}px;top:${cy - 267 - h / 2}px">${gfx(w, h, body)}</div>`;
  }

  private canvas() {
    const area = (x: number, y: number, x2: number, y2: number) => `left:${x - 71}px;top:${y - 267}px;width:${x2 - x}px;height:${y2 - y}px`;
    return html`<div class="canvas">
      ${this.node(175, 291, 652, 718, "", [ic(186, 17, TREE), txt(201, 298, "Enfocar Aplicación")])}
      ${this.node(195, 348, 631, 684, "sel", [
        ic(207, 17, svg`${s("M7 2H22V19H9", "#8b9a9a", 1.5)}${p("M8 3H21V17H8Z", "#fff")}${p("M0 9L6 4V7C10 7 13 9 13 18C11 14 9 13 6 13V16Z", "#7da53e")}${s("M8 21H22", "#333", 2.500)}`),
        txt(222, 397, "Attach Window 'notepad.exe Sin'"), ic(621, 13, UP2)])}
      ${this.pin(413, 335, 16, ADD)} ${this.pin(222, 387, 17, SNIP)}
      <div class="note" style=${area(237, 378, 589, 447)}>
        <div class="row big" style="height:32px">${row(242, [
          ic(259, 16, svg`${p("M5 1H22L19 23H1Z", "#83c0cc")}${p("M22 1L24 3L21 24H3L1 23H19Z", "#8b8f94")}${p("M7 3H15L9 18H4Z", "#aee2ea")}`),
          txt(271, 407, "Sin título: Bloc de notas"),
          ic(468, 11, s("M0 12H24", "#333", 2.500)), ic(514, 11, s("M2 2H22V22H2Z", "#333", 2.800)), ic(560, 12, s("M1 1L23 23M23 1L1 23", "#333", 2.400))])}</div>
        <div class="row" style="height:18px">${row(242, [txt(249, 290, "Archivo"), txt(304, 343, "Edición"), txt(357, 402, "Formato"), txt(416, 432, "Ver"), txt(447, 480, "Ayuda")])}</div>
        <div class="row" style="height:17px">${row(242, [ic(574, 8, s("M2 18L12 6L22 18", "#999", 4))])}</div>
      </div>
      ${this.pin(604, 387, 13, BURGER)}
      ${this.node(225, 467, 602, 656, "", [ic(236, 17, TREE), txt(251, 266, "Do"), ic(592, 13, UP2)])}
      ${this.pin(413, 512, 16, ADD)}
      ${this.node(247, 525, 580, 620, "", [
        ic(257, 16, svg`${s("M1 1H23V23H1Z", "#777", 2)}${s("M5 8H13M9 8V18M14 5H20M17 5V18M14 18H20", "#555", 1.800)}`),
        txt(272, 321, "Type Into"), ic(571, 13, UP2)])}
      ${this.pin(273, 565, 16, SNIP)} ${this.pin(553, 565, 13, BURGER)}
      <div class="pin row" style="left:240px;top:294px;height:20px">${row(311, [txt(311, 514, "Indicar elemento dentro de la ventana", "link")])}</div>
      <div class="field row" style=${area(263, 592, 546, 614)}>${row(265, [txt(270, 454, "\"Hola desde el Enfocar Aplicación.\"")])}</div>
      <div class="field row" style=${area(545, 592, 564, 614)}>${row(547, [ic(555.500, 9, s("M12 0V24M0 12H24", "#555", 2.800))])}</div>
      ${this.pin(413, 633, 16, ADD)} ${this.pin(413, 695, 16, ADD)}
      <div class="menu" style=${area(608, 388, 790, 564)}>
        <div class="mi row">${row(609, [ic(622, 15, svg`<path d="M2 0L2 20L8 15L12 23L16 21L13 14L20 14Z" fill="#fff" stroke="#555" stroke-width="1.800"></path>`), txt(644, 750, "Indicar en pantalla")])}</div>
        <div class="mi on row">${row(609, [txt(644, 754, "Selector de edición")])}</div>
        <div class="mi row">${row(609, [txt(644, 753, "Abrir en UiExplorer")])}</div>
        <div class="mi row">${row(609, [ic(623.500, 16, svg`<rect x="0" y="1" width="24" height="21" fill="#fff" stroke="#666"></rect>${p("M0 0H24V7H0Z", "#555")}${s("M3 11H12M3 15H10", "#888", 1.500)}${p("M12 14L18 10L23 13V20L17 24L12 20Z", "#c06a3a")}${p("M18 11L23 13V18L18 16Z", "#6a9e4c")}`), txt(644, 787, "Agregar pantalla a objeto")])}</div>
        <div class="hr"></div>
        <div class="mi row">${row(609, [txt(644, 788, "Cambiar la captura de pa")])}</div>
        <div class="mi row">${row(609, [txt(644, 788, "Quitar la captura de pant")])}</div>
        <div class="mi row">${row(609, [txt(644, 788, "Mostrar la captura de pa")])}</div>
      </div>
      ${this.pin(732, 437, 14, svg`<path d="M1 0V19L6 15L10 24L15 22L11 14H19Z" fill="#fff" stroke="#444" stroke-width="1.500"></path>`, 22)}
    </div>`;
  }

  private uipath() {
    const sep = (x: number): Item => [x, 1, "", "sep"];
    const car = (cx: number, w = 7): Item => ic(cx, w, CARET, 4, "0 0 10 5.5");
    const fold = s("M1 1H23V23H1ZM6 12H18", "#444", 3);
    return html`<div class="ui">
      <div class="ribbon row">${row(12, [
        sep(14), ic(36, 16, s("M9 20H2V3H15V7M9 8H22V23H9ZM5 1H12V5H5Z", "#777", 1.800), 17, "0 0 24 24", "peg"), txt(49, 81, "Pegar", "peg"), sep(100),
        txt(121, 173, "paquetes"), sep(193), car(237), txt(277, 340, "de pantalla"), txt(355, 404, "de datos"),
        txt(426, 467, "usuario"), car(474.500), sep(497), txt(528, 557, "de IU"), sep(585), txt(612, 684, "no utilizadas"), sep(711), txt(723, 763, "archivo"), car(769.500), sep(783)])}</div>
      <div class="body">
        <div class="pwrap">
          <div class="pa">
            <div class="pa1 row">${row(12, [ic(17, 8, s("M0 6H24M0 18H24", "#c9c9c9", 2), 8), car(33.500, 8),
              ic(50.500, 9, s("M6 1H18V14H6ZM15 1V14M2 14H22M12 14V24", "#555", 2.400), 12)])}</div>
            <div class="pa2 row">${row(12, [ic(49.500, 9, s("M1 1L23 23M23 1L1 23", "#333", 4))])}</div>
            <div class="pa3"></div><div class="pa4"></div>
          </div>
          <div class="row" style="height:22px">${row(12, [txt(12, 24, "os")])}</div>
        </div>
        <div class="main">
          <div class="mtab row"><div class="on row">${row(70, [txt(77, 105, "Main"), ic(120, 9, s("M1 1L23 23M23 1L1 23", "#fff", 3.500))])}</div>${row(132, [car(748, 8)])}</div>
          <div class="crumbs row">${row(71, [txt(78, 106, "Main"), ic(117, 5, s("M4 4L20 12L4 20", "#aaa", 4), 8), txt(127, 244, "CursoRPA - Flowch..."), ic(255, 5, s("M4 4L20 12L4 20", "#aaa", 4), 8), txt(265, 371, "Enfocar Aplicación"), txt(578, 658, "Expandir todo"), txt(669, 750, "Contraer todo")])}</div>
          ${this.canvas()}
          <div class="mfoot row">${row(71, [txt(77, 128, "Variables"), txt(146, 218, "Argumentos"), txt(236, 318, "Importaciones"),
            ic(564.500, 15, p("M5 12L1 8L3 6L7 10L5 3L8 2L10 9V0H13V9L15 2L18 3L17 11L21 8L23 10L17 19V24H8L4 17Z", "#3a3a3a"), 17),
            ic(593.500, 15, svg`<circle cx="15" cy="8" r="6.500" fill="none" stroke="#3a3a3a" stroke-width="3"></circle><circle cx="15" cy="8" r="2" fill="#3a3a3a"></circle>${s("M10 13L1 23", "#3a3a3a", 4.500)}`),
            [612, 82, row(612, [txt(617, 658, "92.17%"), ic(684, 6, s("M2 6L12 17L22 6", "#777", 4.500))]), "zoom"],
            ic(713.500, 16, svg`${p("M0 0H9L0 9ZM24 0V9L15 0ZM0 24V15L9 24ZM24 24H15L24 15Z", "#3a3a3a")}${s("M7 7H17V17H7ZM2 2L8 8M22 2L16 8M2 22L8 16M22 22L16 16", "#3a3a3a", 2)}`),
            ic(742, 16, svg`${s("M1 1H23V23H1Z", "#555", 2.800)}${s("M5 5L10 10M19 5L14 10M5 19L10 14M19 19L14 14", "#555", 3)}`)])}</div>
        </div>
        <div class="pc">
          <div class="row">${row(766, [txt(771, 788, "Pro")])}</div>
          <div class="row">${row(766, [txt(769, 788, "UiP")])}</div>
          <div class="row">${row(766, [ic(773, 10, fold), txt(785, 796, "C")])}</div>
          <div class="row" style="height:75px"></div>
          <div class="row">${row(766, [ic(773, 10, fold), txt(785, 794, "E")])}</div>
          <div class="row" style="height:176px"></div>
          <div class="pcw" style="height:180px"></div>
          <div class="row" style="height:22px">${row(766, [ic(779, 18, s("M2 22L14 10M13 10A5 5 0 0 1 19 2L17 7L22 6A5 5 0 0 1 14 11", "#444", 4), 16)])}</div>
        </div>
      </div>
    </div>`;
  }

  private leftWindow() {
    return html`<div class="win left">
      <div class="l-tabs">
        <div class="l-group" style="padding-left:14px">${LEFT_TABS.map((t, i) => html`<div class="l-tab ${i === 4 ? "none" : ""}">${gfx(15, 24, t)}</div>`)}</div>
        <div class="cur">${gfx(12, 12, s("M1 1L23 23M23 1L1 23", "#3c4043", 4))}</div>
        <div class="l-group">${LEFT_TABS_2.map((t) => html`<div class="l-tab">${gfx(14.500, 24, t)}</div>`)}</div>
        <div class="l-group">${row(409, [ic(442, 18, PLUS)])}</div>
        <div class="row l-ctl">${row(451, [ic(572, 16, CHEV, 11, "0 0 16 11"), ic(640.500, 15, s("M0 12H24", "#000", 1.800)), ic(709.500, 15, s("M1 1H23V23H1Z", "#000", 1.800)), ic(778.500, 15, s("M0 0L24 24M24 0L0 24", "#111", 1.800))])}</div>
      </div>
      <div class="l-tool row">${row(12, [
        ic(44.500, 29, BACK), [78, 29, gfx(29, 29, FWD), "light"], ic(141, 31, RELOAD),
        [174, 281, html`<div class="l-url row">${row(174, [ic(201, 16, LOCK, 19), txt(226, 318, "platzi.com", "dark"), txt(318, 343, "/..."), ic(380, 23, SHARE, 22), ic(427.500, 27, STAR)])}</div>`],
        ic(488, 24, PUZZLE), ic(535, 29, QUEUE), ic(583.500, 23, PANEL), ic(631.500, 33, CREST),
        [659, 142, html`<div class="upd row">${row(660.5, [txt(678, 756, "Actualizar"), ic(780, 26, DOTS3, 24, "0 0 24 24", "red")])}</div>`]])}</div>
      <div class="l-marks row">${row(12, [
        ic(45, 22, GMAIL, 17, "0 0 24 18"), txt(69, 115, "Gmail"), ic(152, 24, YT, 17, "0 0 24 17"), txt(176, 245, "YouTube"),
        ic(281, 20, MAPS, 24), txt(305, 348, "Maps"), ic(386, 22, TRANSL), txt(410, 473, "Traducir"), ic(509, 19, MONDAY, 17), txt(533, 661, "Project Planning"),
        ic(778, 10, s("M2 2L11 12L2 22M12 2L21 12L12 22", "#4a4d51", 3.500), 10)])}</div>
      <div class="l-body">
        <div class="video">
          ${this.uipath()}
          <div class="player">
            <div class="pl1"></div><div class="pl2"></div><div class="pl3"><i></i><i></i></div>
            <div class="ghost">● Orchestrator</div>
            <div class="over row">${row(12, [[12, 552, html`<div class="seek"><i></i><b></b><u></u><div class="knob"></div></div>`], txt(600, 696, "-2:10"), txt(710, 788, "1.25")])}</div>
          </div>
          <div class="title">
            <div class="row">${row(12, [txt(-6, 783, "o de Automatización de Procesos RPA con")])}</div>
            <div class="row">${row(12, [[7, 30, "h"]])}</div>
          </div>
        </div>
        <div class="l-vs"><div style="height:16px;padding-top:10px">${gfx(11, 6, p("M0 6H11L5.5 0Z"), "0 0 11 6")}</div><div class="th"></div>
          <div class="dark" style="margin-top:88px">${gfx(11, 6, p("M0 0H11L5.5 6Z", "#505050"), "0 0 11 6")}</div></div>
      </div>
      <div class="l-hs row">${row(12, [ic(24, 6, p("M6 0V11L0 5.5Z", "#a3a3a3"), 11, "0 0 6 11"), [47, 703, html`<div class="th"></div>`], ic(776, 6, p("M0 0V11L6 5.5Z"), 11, "0 0 6 11"), [788, 24, "", "corner"]])}</div>
    </div>`;
  }

  private rightWindow() {
    const car = (cx: number, cls = ""): Item => ic(cx, 13, CARET, 7, "0 0 10 5.5", cls);
    const vr = (x: number): Item => [x, 1, html`<div class="vr"></div>`];
    return html`<div class="win right">
      <div class="r-tabs row"><div class="first"></div>${RIGHT_TABS.map((t) => html`<div class="r-tab">${gfx(24, 24, t)}</div>`)}<div class="r-tab">${gfx(22, 17, GMAIL, "0 0 24 18")}</div>
        ${row(1527, [[1551, 18, gfx(18, 18, PLUS), "dark"], ic(1690, 15, svg`${s("M1 1L8 10L15 1", "#5c7096", 1)}`, 10, "0 0 16 11", "up"), ic(1758, 15, s("M0 12H24", "#5c7096", 1.600), 15, "0 0 24 24", "up"), ic(1827, 15, s("M1 6H18V23H1ZM6 6V1H23V18H18", "#52668c", 1.600), 15, "0 0 24 24", "up"), ic(1896, 15, s("M0 0L24 24M24 0L0 24", "#5c7096", 1.600), 15, "0 0 24 24", "up")])}</div>
      <div class="r-tool"><div class="row">
        <div class="r-url row">${row(800, [txt(808, 1309.500, "/qbAHG2atyE2Fw4MlSiSIo/edit?pli=1#gid=794988783"), ic(1450, 27, ZOOM), ic(1498, 23, SHARE, 22), ic(1546, 26, STAR)])}</div>
        ${row(1573, [[1594.500, 24, html`<span class="fit tp">Tp</span>`], ic(1654, 24, PUZZLE, 24, "0 0 24 24", "dark"), ic(1701.500, 23, PANEL, 23, "0 0 24 24", "dark"),
          [1733, 33, html`<div class="avatar">D</div>`], [1777, 142, html`<div class="upd row">${row(1778.5, [txt(1796, 1873, "Actualizar"), ic(1898, 26, DOTS3, 24, "0 0 24 24", "red")])}</div>`]])}
      </div></div>
      <div class="s-head row">${row(800, [
        txt(806, 818, "s", "low"), txt(842, 971, "Extensiones", "low"), txt(994, 1059, "Ayuda", "low"), txt(1094, 1333, "Última modificación h...", "low grey"),
        [1396, 40, gfx(40, 40, p("M21.99 4c0-1.1-.89-2-1.99-2H4c-1.1 0-2 .9-2 2v12c0 1.1.9 2 2 2h14l4 4-.01-18zM20 4v13.170L18.830 16H4V4h16zM6 12h12v2H6zm0-3h12v2H6zm0-3h12v2H6z", "#5f6368"))],
        [1466, 198, html`<div class="btn row">${row(1466, [ic(1499, 22, svg`<circle cx="12" cy="5" r="4.500" fill="#fff"></circle>${p("M2 18Q4 11 12 11T22 18Z", "#fff")}${s("M2 22H10M14 22H22", "#fff", 3)}`, 28), txt(1521, 1635, "Compartir")])}</div>`],
        [1697, 201, html`<div class="btn blue row">${row(1697, [txt(1723, 1871, "Iniciar sesión")])}</div>`]])}</div>
      <div class="s-bar row">${row(800, [
        vr(825), txt(851, 874, "10"), car(927), vr(947),
        ic(977, 33, p("M15.600 10.790c.970-.670 1.650-1.770 1.650-2.790 0-2.260-1.750-4-4-4H7v14h7.040c2.090 0 3.710-1.700 3.710-3.790 0-1.520-.860-2.820-2.150-3.420zM10 6.500h3c.830 0 1.500.670 1.500 1.500s-.670 1.500-1.500 1.500h-3v-3zm3.500 9H10v-3h3.500c.830 0 1.500.670 1.500 1.500s-.670 1.500-1.500 1.500z"), 34, "0 -1 24 24"),
        ic(1024, 34, p("M10 4v3h2.210l-3.420 8H6v3h8v-3h-2.210l3.420-8H18V4z"), 34, "0 -1 24 24"),
        ic(1070, 31, svg`${p("M3 10H21V12H3Z")}${s("M16.300 7.300C16 2.600 8.300 3 8.300 7C8.300 8.500 9 9.500 10.500 10.500M7.600 15C8 20.500 16.500 20.300 16.200 15.500C16.100 14 15.500 13 14 12", "currentColor", 2.700)}`, 31, "0 0 24 24"),
        [1101, 34, html`<div class="tint">${gfx(30, 27, p("M11 3L5.500 17h2.250l1.120-3h6.250l1.120 3h2.250L13 3h-2zm-1.380 9L12 5.670 14.380 12H9.620z"), "0 0 24 20")}<i></i></div>`],
        vr(1149),
        [1165, 35, html`<div class="tint pale">${gfx(32, 27, p("M16.560 8.940L7.620 0 6.210 1.410l2.380 2.380-5.150 5.150c-.590.590-.590 1.540 0 2.120l5.500 5.500c.290.290.680.440 1.060.440s.770-.150 1.060-.440l5.500-5.500c.590-.580.590-1.530 0-2.120zM5.210 10L10 5.210 14.790 10H5.210zM19 11.500s-2 2.170-2 3.500c0 1.100.900 2 2 2s2-.900 2-2c0-1.330-2-3.500-2-3.500z"), "0 -1 24 20")}<i></i></div>`],
        ic(1231, 31, p("M3 3v18h18V3H3zm8 16H5v-6h6v6zm0-8H5V5h6v6zm8 8h-6v-6h6v6zm0-8h-6V5h6v6z")),
        ic(1281, 27, svg`${s("M1.500 7V1.500H10M14 1.500H22.500V7M1.500 17V22.500H10M14 22.500H22.500V17M0 12H8M24 12H16", "currentColor", 2.700)}${p("M6 8L10.500 12L6 16ZM18 8L13.500 12L18 16Z")}`, 24, "0 0 24 24", "light"),
        car(1318, "light"), vr(1339),
        ic(1368, 24, s("M0 1.500H24M0 8H16.500M0 15H24M0 22.500H16.500", "currentColor", 3)), car(1397),
        ic(1433, 20, svg`${s("M12 0V14M0 22.500H24", "currentColor", 2.800)}${p("M6 11H18L12 18Z")}`, 23), car(1461),
        ic(1497, 23, svg`${s("M1.500 0V24M22.500 0V24", "currentColor", 2.800)}${s("M6 6H13A4.500 4.500 0 0 1 13 15.500H9", "currentColor", 2.500)}${p("M5 15.500L11 10.500V20.500Z")}`, 24), car(1525),
        ic(1561, 25, svg`${s("M1 1.500L17 6.500M1 1.500L7.500 17M13.500 5.500L6 12.500", "currentColor", 2.500)}${s("M8 23L22 8", "currentColor", 2.800)}${p("M25 5V13L17 5Z")}`, 24), car(1589.500), vr(1611),
        ic(1642.500, 23, svg`<circle cx="3" cy="12" r="2.700" fill="currentColor"></circle><circle cx="12" cy="12" r="2.700" fill="currentColor"></circle><circle cx="21" cy="12" r="2.700" fill="currentColor"></circle>`),
        ic(1873.500, 20, s("M2 18L12 7L22 18", "currentColor", 4))])}</div>
      <div class="s-formula"></div>
      <div class="s-grid">
        <div class="s-table">
          <div class="g-row g-head"><div>D</div><div>E</div><div>F</div></div>
          ${ROWS.map((r, i) => html`<div class="g-row g-data ${r.green ? "green" : ""} ${r.red && ROWS[i + 1]?.red ? "next" : ""}" style="height:${r.h}px">
            <div class="d"><span style="width:${r.end - 800}px">${r.d}</span></div><div class="e ${r.red ? "redc" : ""}">${r.e}</div><div class="f"><div class="box"></div></div></div>`)}
        </div>
        <div class="s-vs"><div class="s-thumb"></div>
          <div class="s-vsb first">${gfx(9, 6, p("M0 6H11L5.500 0Z"), "0 0 11 6")}</div><div class="s-vsb">${gfx(9, 6, p("M0 0H11L5.500 6Z"), "0 0 11 6")}</div></div>
      </div>
      <div class="s-hs row">${row(800, [[1861, 27, gfx(6, 10, p("M6 0V11L0 5.500Z"), "0 0 6 11"), "hb"], [1888, 24, gfx(6, 10, p("M0 0V11L6 5.500Z"), "0 0 6 11"), "hb"], [1912, 18, "", "hb"]])}</div>
      <div class="s-tabs row">
        <div class="act row">${row(800, [txt(809, 1023, "SPECTS (Logistics)"), ic(1044.500, 13, CARET, 7, "0 0 10 5.500")])}</div>
        ${row(1079, [txt(1106, 1153, "USA"), [1161, 9, html`<span style="overflow:hidden;width:9px;flex:none">F</span>`], [1163, 10, html`<div class="fade"></div>`],
          ic(1200.500, 9, p("M9 0V17L0 8.500Z"), 17, "0 0 9 17"), ic(1251.500, 9, p("M0 0V17L9 8.500Z"), 17, "0 0 9 17"),
          ic(1881, 38, p("M19 2H5c-1.100 0-2 .900-2 2v14c0 1.100.900 2 2 2h4l3 3 3-3h4c1.100 0 2-.900 2-2V4c0-1.100-.900-2-2-2zm-5.120 10.880L12 17l-1.880-4.120L6 11l4.120-1.880L12 5l1.880 4.120L18 11l-4.120 1.880z", "#6b6b6b"))])}
      </div>
      <div class="edge"></div>
    </div>`;
  }

  render() {
    return html`
      <div class="desk">
        <div class="desk-a"></div><div class="desk-b"></div><div class="desk-c"></div>
        <div class="remote">${gfx(14, 18, s("M2 2L20 12L2 22"))}</div>
        <div class="status row">${row(1003, [
          ic(1018, 12, svg`<circle cx="8" cy="20" r="3" fill="none" stroke="#fff" stroke-width="2"></circle>${s("M8 17V6M8 12Q18 12 18 6", "#fff", 2)}`, 18), txt(1035, 1067, "main"),
          ic(1102, 14, s("M3 8A10 10 0 1 0 21 8", "#fff", 2), 16), ic(1139, 15, svg`<circle cx="12" cy="12" r="10" fill="none" stroke="#fff" stroke-width="2"></circle>${s("M8 8L16 16M16 8L8 16", "#fff", 2)}`), txt(1153, 1161, "0"),
          ic(1174, 16, s("M12 1L23 22H1Z", "#fff", 2)), txt(1187, 1195, "0"),
          txt(1510, 1603, "Ln 547, Col 11"), txt(1623, 1684, "Spaces: 4"), txt(1705, 1743, "UTF-8"), txt(1764, 1792, "CRLF"), txt(1811, 1849, "HTML"),
          ic(1875, 13, s("M2 24Q4 14 12 14T22 24M12 2V12", "#fff", 2)), ic(1914, 14, svg`${s("M2 18H22M5 18V9Q5 2 12 2T19 9V18", "#fff", 2)}<circle cx="12" cy="21" r="3" fill="#fff"></circle>`, 17)])}</div>
      </div>
      ${this.rightWindow()}
      <div class="left-shadow"></div>
      ${this.leftWindow()}
    `;
  }
}
